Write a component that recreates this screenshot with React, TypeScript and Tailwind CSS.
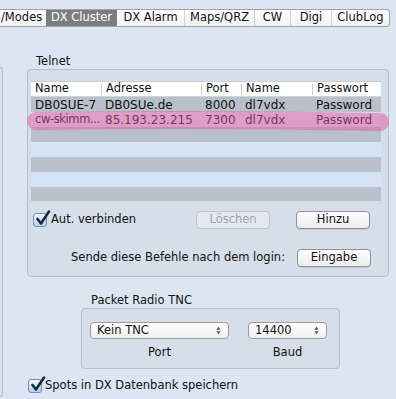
import React from 'react';

const font = {fontFamily: '"DejaVu Sans", "Liberation Sans", sans-serif'};

function Check() {
  return (
    <span className="relative inline-block w-[14px] h-[14px] rounded-[3px] border border-[#6f8fb5] bg-gradient-to-b from-[#f4f8fd] to-[#b9cfe9]">
      <svg viewBox="0 0 16 16" className="absolute left-[1px] top-[-4px] w-[16px] h-[16px]">
        <path d="M2.5 9 L6 13.5 L14 1.5" fill="none" stroke="#1b2b3f" strokeWidth="2.6" strokeLinecap="round" strokeLinejoin="round" />
      </svg>
    </span>
  );
}

function Btn({label, disabled}: {label: string; disabled?: boolean}) {
  return (
    <div
      className={
        'w-[74px] h-[18px] rounded-[4px] border flex items-center justify-center text-[11.5px] leading-none ' +
        (disabled
          ? 'border-[#bcc3cc] bg-[#e4e9ef] text-[#9ea5ad]'
          : 'border-[#8e9297] bg-gradient-to-b from-white to-[#ececec] text-[#111] shadow-[0_1px_0_rgba(0,0,0,0.08)]')
      }
    >
      {label}
    </div>
  );
}

function Arrows() {
  return (
    <svg viewBox="0 0 6 10" className="w-[5px] h-[9px]">
      <path d="M3 0.5 L5.5 4 H0.5 Z" fill="#555" />
      <path d="M3 9.5 L5.5 6 H0.5 Z" fill="#555" />
    </svg>
  );
}

function Popup({label, width}: {label: string; width: string}) {
  return (
    <div className={width + ' h-[17px] rounded-[4px] border border-[#9a9ea3] bg-gradient-to-b from-white to-[#efefef] flex items-center justify-between pl-[6px] pr-[7px] text-[11.5px] text-[#111] leading-none'}>
      <span>{label}</span>
      <Arrows />
    </div>
  );
}

const cols = ['w-[70px]', 'w-[100px]', 'w-[40px]', 'w-[71px]', 'w-[69px]'];

function Row({cells, bg, tight}: {cells: string[]; bg: string; tight?: boolean}) {
  return (
    <div className={'flex h-[15px] items-center text-[12px] text-[#111] leading-none ' + bg}>
      {cells.map((c, i) => (
        <div
          key={i}
          className={cols[i] + ' pl-[4px] whitespace-nowrap ' + (tight && i === 0 ? 'text-[11.5px] tracking-[-0.4px]' : '')}
        >
          {c}
        </div>
      ))}
    </div>
  );
}

const tabs = ['DX Cluster', 'DX Alarm', 'Maps/QRZ', 'CW', 'Digi', 'ClubLog'];
const tabW = ['w-[71px]', 'w-[67px]', 'w-[70px]', 'w-[36px]', 'w-[41px]', 'w-[58px]'];

export default function App() {
  return (
    <div className="w-[396px] h-[399px] overflow-hidden bg-[#dce5f1] text-[#111]" style={font}>
      {/* Tabs */}
      <div className="pt-[9px]">
        <div className="w-[390px] h-[18px] flex border-y border-r border-[#9ea3a9] rounded-r-[4px] bg-gradient-to-b from-white to-[#f1f1f1] text-[11.5px] leading-none overflow-hidden">
          <div className="w-[46px] flex items-center pl-[1px]">/Modes</div>
          {tabs.map((t, i) => (
            <div
              key={t}
              className={
                tabW[i] +
                ' flex items-center justify-center ' +
                (i === 0
                  ? 'bg-[#7b7d80] text-white'
                  : i > 1
                  ? 'border-l border-[#cfd2d6]'
                  : '')
              }
            >
              {t}
            </div>
          ))}
        </div>
      </div>

      <div className="flex">
        {/* left panel edge */}
        <div className="w-[3px] mt-[40px] h-[330px] border-y border-r border-[#b7c0cb] rounded-r-[4px] bg-[#d7e0ec]" />

        <div className="ml-[24px] w-[362px]">
          <div className="mt-[27px] pl-[9px] h-[14px] text-[11.5px] leading-[14px]">Telnet</div>

          {/* Telnet group */}
          <div className="mt-[1px] h-[208px] rounded-[4px] border border-[#b6bfca] bg-[#d5dee9] pl-[3px] pt-[11px]">
            <div className="relative w-[350px] h-[120px] bg-[#b9c0c9] border-t border-[#c7ccd2]">
              <div className="flex h-[15px] items-center bg-white text-[11.5px] leading-none border-b border-[#d0d4d8]">
                {['Name', 'Adresse', 'Port', 'Name', 'Passwort'].map((c, i) => (
                  <div key={i} className={cols[i] + ' pl-[4px] h-[11px] flex items-center ' + (i > 0 ? 'border-l border-[#c9ccd0]' : '')}>
                    {c}
                  </div>
                ))}
              </div>
              <Row cells={['DB0SUE-7', 'DB0SUe.de', '8000', 'dl7vdx', 'Password']} bg="bg-[#b9c0c9]" />
              <Row cells={['cw-skimm...', '85.193.23.215', '7300', 'dl7vdx', 'Password']} bg="bg-[#d6e3f7]" tight />
              <div className="h-[15px] bg-[#b9c0c9]" />
              <div className="h-[15px] bg-[#d6e3f7]" />
              <div className="h-[15px] bg-[#b9c0c9]" />
              <div className="h-[15px] bg-[#d6e3f7]" />
              <div className="h-[14px] bg-[#b9c0c9]" />

              {/* highlighter stroke */}
              <svg className="absolute left-[-4px] top-[28px] w-[362px] h-[22px] overflow-visible" viewBox="0 0 362 22">
                <path d="M9 11 C 120 9.5, 250 10, 353 12" fill="none" stroke="#e2579c" strokeOpacity="0.5" strokeWidth="18" strokeLinecap="round" />
              </svg>
            </div>

            <div className="mt-[10px] flex items-center">
              <div className="flex items-center ml-[2px]">
                <Check />
                <span className="ml-[4px] text-[11.5px] leading-none">Aut. verbinden</span>
              </div>
              <div className="ml-[60px]">
                <Btn label="Löschen" disabled />
              </div>
              <div className="ml-[26px]">
                <Btn label="Hinzu" />
              </div>
            </div>

            <div className="mt-[20px] flex items-center">
              <span className="ml-[40px] w-[225px] text-[11.5px] leading-none whitespace-nowrap">Sende diese Befehle nach dem login:</span>
              <div className="ml-[1px]">
                <Btn label="Eingabe" />
              </div>
            </div>
          </div>

          <div className="mt-[16px] ml-[64px] text-[11.5px] leading-[14px]">Packet Radio TNC</div>

          <div className="mt-[1px] ml-[54px] w-[259px] h-[61px] rounded-[4px] border border-[#b6bfca] bg-[#d5dee9] pt-[13px] pl-[8px]">
            <div className="flex">
              <div className="flex flex-col items-center">
                <Popup label="Kein TNC" width="w-[139px]" />
                <div className="mt-[8px] text-[11.5px] leading-none">Port</div>
              </div>
              <div className="ml-[19px] flex flex-col items-center">
                <Popup label="14400" width="w-[79px]" />
                <div className="mt-[8px] text-[11.5px] leading-none">Baud</div>
              </div>
            </div>
          </div>

          <div className="mt-[10px] ml-[1px] flex items-center">
            <Check />
            <span className="ml-[3px] text-[11.5px] leading-none">Spots in DX Datenbank speichern</span>
          </div>
        </div>
      </div>
    </div>
  );
}
